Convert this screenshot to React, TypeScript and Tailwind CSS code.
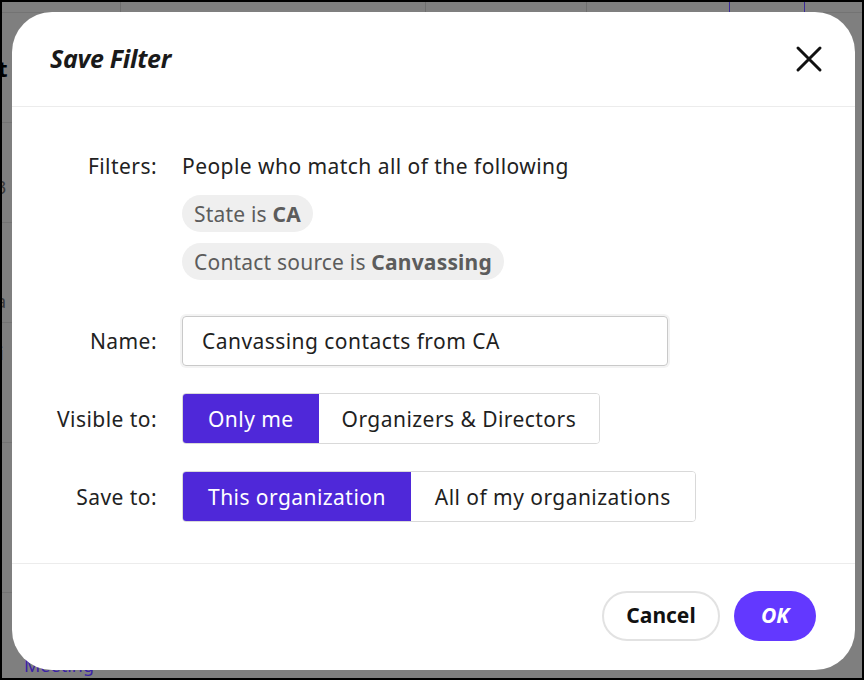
import React from "react";

const font = { fontFamily: '"Noto Sans", "Open Sans", sans-serif' };

function Segmented({ options, active, pad }: { options: string[]; active: number; pad: string }) {
  return (
    <div className="flex h-[51px] w-fit overflow-hidden rounded-[4px] border border-[#d9d9d9]">
      {options.map((o, i) => (
        <div
          key={o}
          className={
            i === active
              ? "flex items-center bg-[#4f28d9] px-[25px] text-white"
              : "flex items-center bg-white text-[#1f1f1f] " + pad
          }
        >
          {o}
        </div>
      ))}
    </div>
  );
}

export default function App() {
  return (
    <div className="relative h-[680px] w-[864px] overflow-hidden border-[2px] border-black bg-[#7f7f7f]" style={font}>
      {/* dimmed page behind */}
      <div className="absolute left-0 top-[10px] h-px w-full bg-[#737373]" />
      <div className="absolute left-[118px] top-0 h-[12px] w-px bg-[#6e6e6e]" />
      <div className="absolute left-[423px] top-0 h-[12px] w-px bg-[#6e6e6e]" />
      <div className="absolute left-[584px] top-0 h-[12px] w-px bg-[#6e6e6e]" />
      <div className="absolute left-[727px] top-0 h-[12px] w-px bg-[#3a2a9a]" />
      <div className="absolute left-[802px] top-0 h-[12px] w-px bg-[#3a2a9a]" />
      <div className="absolute left-0 top-[120px] h-px w-[12px] bg-[#737373]" />
      <div className="absolute left-0 top-[220px] h-px w-[12px] bg-[#737373]" />
      <div className="absolute left-0 top-[320px] h-px w-[12px] bg-[#737373]" />
      <div className="absolute left-0 top-[440px] h-px w-[12px] bg-[#737373]" />
      <div className="absolute left-0 top-[590px] h-px w-[12px] bg-[#737373]" />
      <div className="absolute left-[-4px] top-[50px] text-[22px] font-bold text-black">t</div>
      <div className="absolute left-[-6px] top-[172px] text-[18px] text-[#3a3a3a]">3</div>
      <div className="absolute left-[-6px] top-[286px] text-[18px] text-[#3a3a3a]">a</div>
      <div className="absolute left-[-4px] top-[338px] text-[18px] font-bold text-[#3b22a8]">i</div>
      <div className="absolute left-[22px] top-[650px] text-[18px] text-[#3b22a8]">Meeting</div>

      {/* modal */}
      <div className="absolute left-[10px] top-[10px] flex h-[658px] w-[843px] flex-col rounded-[40px] bg-white">
        <div className="flex h-[95px] items-center justify-between border-b border-[#ececec] pl-[38px] pr-[32px]">
          <div className="text-[25px] font-bold italic tracking-[-0.3px] text-[#1a1a1a]">Save Filter</div>
          <svg width="28" height="28" viewBox="0 0 28 28" fill="none">
            <path d="M3 3L25 25M25 3L3 25" stroke="#111" strokeWidth="3" strokeLinecap="round" />
          </svg>
        </div>

        <div className="grid flex-1 grid-cols-[145px_1fr] content-start gap-x-[25px] border-b border-[#ececec] pt-[45px] text-[21px] leading-[28px] tracking-[0.45px]">
          <div className="text-right text-[#222]">Filters:</div>
          <div className="flex flex-col items-start">
            <div className="text-[#222]">People who match all of the following</div>
            <div className="mt-[15px] flex h-[37px] items-center rounded-full bg-[#efefef] px-[12px] tracking-[0.2px] text-[#5c5c5c]">
              State is&nbsp;<span className="font-bold">CA</span>
            </div>
            <div className="mt-[11px] flex h-[37px] items-center rounded-full bg-[#efefef] px-[12px] tracking-[0.2px] text-[#5c5c5c]">
              Contact source is&nbsp;<span className="font-bold">Canvassing</span>
            </div>
          </div>

          <div className="mt-[36px] flex items-center justify-end text-[#222]">Name:</div>
          <div className="mt-[36px]">
            <div className="flex h-[50px] w-[486px] items-center rounded-[4px] border border-[#c9c9c9] px-[19px] text-[#1f1f1f] shadow-[0_0_0_2px_#f3f3f3]">
              Canvassing contacts from CA
            </div>
          </div>

          <div className="mt-[27px] flex items-center justify-end text-[#222]">Visible to:</div>
          <div className="mt-[27px]">
            <Segmented options={["Only me", "Organizers & Directors"]} active={0} pad="px-[23px]" />
          </div>

          <div className="mt-[27px] flex items-center justify-end text-[#222]">Save to:</div>
          <div className="mt-[27px]">
            <Segmented options={["This organization", "All of my organizations"]} active={0} pad="px-[24px]" />
          </div>
        </div>

        <div className="flex h-[106px] shrink-0 items-center justify-end gap-[14px] pb-[2px] pr-[39px]">
          <div className="flex h-[50px] w-[118px] items-center justify-center rounded-full border-2 border-[#e2e2e2] text-[21px] font-bold text-[#111]">
            Cancel
          </div>
          <div className="flex h-[50px] w-[82px] items-center justify-center rounded-full bg-[#6338ff] text-[21px] font-bold italic text-white">
            OK
          </div>
        </div>
      </div>
    </div>
  );
}
